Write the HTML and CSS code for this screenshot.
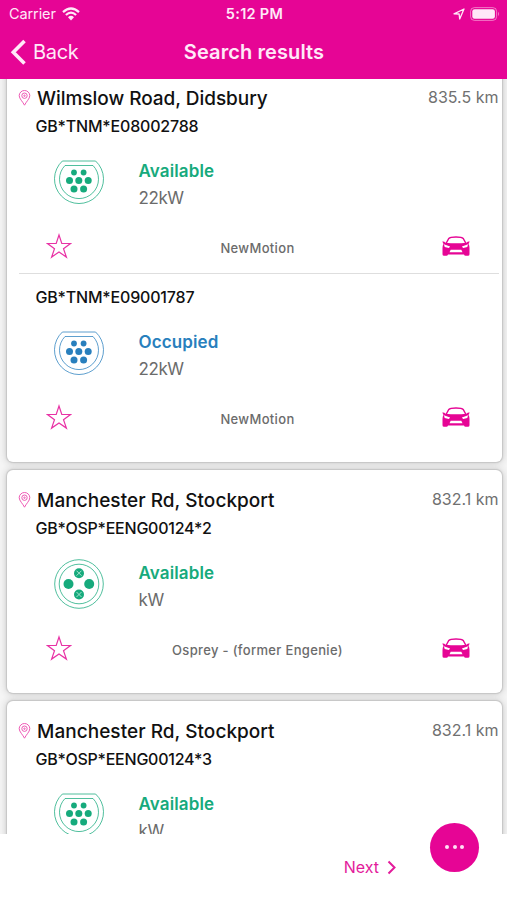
FILE: index.html
```html
<!DOCTYPE html>
<html lang="en">
<head>
<meta charset="utf-8">
<title>Search results</title>
<link rel="stylesheet" href="styles.css">
</head>
<body>
<svg class="defs" width="0" height="0" aria-hidden="true">
  <symbol id="pin" viewBox="0 0 12 16"><path d="M6 15.200C4.400 11.800.7 8.700.7 5.700a5.300 5.200 0 0 1 10.600 0c0 3-3.700 6.100-5.300 9.500z"/><circle cx="6" cy="5.700" r="2.700"/><circle cx="6" cy="5.700" r=".7"/></symbol>
  <symbol id="star" viewBox="0 0 26 26"><path d="M13 2l2.800 8.500h8.700l-7 5.200 2.900 8.400-7.400-5.200-7.400 5.200 2.900-8.400-7-5.200h8.700z"/></symbol>
  <symbol id="car" viewBox="0 0 28 22"><path class="roof" d="M4 8.500L6.800 3.500Q8 2 14 2T21.200 3.500L24 8.500"/><path d="M.3 6.600q1.700-.6 3.200 1.200Q14 8.800 24.500 7.800 26 6 27.700 6.600l-1.200 2.300q1 1.300 1 4v6.300q0 1.600-1.600 1.600h-2.300q-1.300 0-1.600-1.300H6q-.3 1.300-1.600 1.300H2.100q-1.600 0-1.600-1.600v-6.300q0-2.700 1-4z"/><path class="cut" d="M1.900 9.300l6.200 2.300-1.200 1.300-4.200-1zM26.100 9.300l-6.200 2.300 1.200 1.300 4.200-1zM8.700 14.800h10.600l1.200 2.400h-13z"/></symbol>
  <symbol id="type2" viewBox="0 0 50 50"><path class="ring" d="M8.400 4H41.600A24.500 24.500 0 1 1 8.400 4zM11 8.500H39A19.500 19.500 0 1 1 11 8.500z"/><circle cx="20" cy="15.500" r="2.900"/><circle cx="29.600" cy="15.500" r="2.900"/><circle cx="15.500" cy="23.500" r="3.500"/><circle cx="24.800" cy="23.500" r="3.500"/><circle cx="34.200" cy="23.500" r="3.500"/><circle cx="20" cy="32" r="3.500"/><circle cx="29.600" cy="32" r="3.500"/></symbol>
  <symbol id="round" viewBox="0 0 50 50"><circle class="ring" cx="25" cy="25" r="24.300"/><circle class="ring" cx="25" cy="25" r="19.800"/><circle cx="14.500" cy="25" r="5"/><circle cx="35.200" cy="25" r="5"/><circle cx="25" cy="14.200" r="5"/><circle cx="25" cy="35.500" r="5"/><path class="cross" d="M22.500 11.700l5 5m0-5l-5 5M22.500 33l5 5m0-5l-5 5"/></symbol>
</svg>
<div class="app">
  <header>
    <div class="status">
      <div class="carrier"><span>Carrier</span><svg width="18" height="14" viewBox="0 0 18 14"><path d="M1 5.100Q9-2.100 17 5.100M3.900 8Q9 3.300 14.100 8" fill="none" stroke="currentColor" stroke-width="2.200"/><path d="M6 10.200q3-2.700 6 0L9 13.400z" fill="currentColor"/></svg></div>
      <div class="clock">5:12 PM</div>
      <div class="power"><svg width="12" height="12" viewBox="0 0 12 12"><path d="M1 5.800L11 1 6.700 11 6.100 6z" fill="none" stroke="currentColor" stroke-width="1.300" stroke-linejoin="round"/></svg><svg width="30" height="14" viewBox="0 0 30 14"><rect x=".6" y=".6" width="26" height="12.800" rx="3.800" fill="none" stroke="currentColor" opacity=".5"/><rect x="2.300" y="2.300" width="22.600" height="9.400" rx="2.300" fill="currentColor"/><path d="M28 4.800q2 2.200 0 4.400z" fill="currentColor" opacity=".5"/></svg></div>
    </div>
    <nav>
      <div class="back"><svg width="17" height="27" viewBox="0 0 17 27"><path d="M14.500 2L3.300 13.300l11.200 11.200" fill="none" stroke="currentColor" stroke-width="3.600"/></svg><span>Back</span></div>
      <h1>Search results</h1>
    </nav>
  </header>
  <main>
    <article class="card">
      <div class="place"><svg class="pin"><use href="#pin"/></svg><h2>Wilmslow Road, Didsbury</h2><span class="distance">835.5 km</span></div>
      <section class="point">
        <h3>GB*TNM*E08002788</h3>
        <div class="details available"><svg class="plug"><use href="#type2"/></svg><div><div class="state">Available</div><div class="watts">22kW</div></div></div>
        <div class="actions"><svg class="star"><use href="#star"/></svg><span>NewMotion</span><svg class="car"><use href="#car"/></svg></div>
      </section>
      <section class="point">
        <h3 class="second">GB*TNM*E09001787</h3>
        <div class="details occupied"><svg class="plug"><use href="#type2"/></svg><div><div class="state">Occupied</div><div class="watts">22kW</div></div></div>
        <div class="actions"><svg class="star"><use href="#star"/></svg><span>NewMotion</span><svg class="car"><use href="#car"/></svg></div>
      </section>
    </article>
    <article class="card">
      <div class="place rd"><svg class="pin"><use href="#pin"/></svg><h2>Manchester Rd, Stockport</h2><span class="distance">832.1 km</span></div>
      <section class="point">
        <h3 class="long">GB*OSP*EENG00124*2</h3>
        <div class="details available"><svg class="plug"><use href="#round"/></svg><div><div class="state">Available</div><div class="watts">kW</div></div></div>
        <div class="actions"><svg class="star"><use href="#star"/></svg><span>Osprey - (former Engenie)</span><svg class="car"><use href="#car"/></svg></div>
      </section>
    </article>
    <article class="card">
      <div class="place rd"><svg class="pin"><use href="#pin"/></svg><h2>Manchester Rd, Stockport</h2><span class="distance">832.1 km</span></div>
      <section class="point">
        <h3 class="long">GB*OSP*EENG00124*3</h3>
        <div class="details available"><svg class="plug"><use href="#type2"/></svg><div><div class="state">Available</div><div class="watts">kW</div></div></div>
      </section>
    </article>
  </main>
  <footer><span>Next</span><svg width="10" height="15" viewBox="0 0 10 15"><path d="M1.500 1.500l6 6-6 6" fill="none" stroke="currentColor" stroke-width="2"/></svg></footer>
  <div class="more"><i></i><i></i><i></i></div>
</div>
</body>
</html>
```
FILE: styles.css
```css
* { box-sizing: border-box; }
body { margin: 0; font-family: Inter, "Liberation Sans", sans-serif; background: #fff; }
h1, h2, h3 { margin: 0; font-weight: 500; }
svg { display: block; flex: none; }
.defs { position: absolute; }
.app { position: relative; width: 507px; height: 900px; overflow: hidden; display: flex; flex-direction: column; }
header { height: 79px; flex: none; background: #e60595; color: #ffe9f8; }
.status { height: 27px; display: grid; grid-template-columns: 1fr auto 1fr; align-items: center; padding: 0 7px 0 9px; }
.carrier { display: flex; align-items: center; gap: 6px; font-size: 14.500px; letter-spacing: -.1px; }
.clock { font-size: 14.500px; font-weight: 600; letter-spacing: .3px; }
.power { display: flex; justify-content: flex-end; align-items: center; gap: 5px; }
nav { height: 50px; display: grid; grid-template-columns: 1fr auto 1fr; align-items: center; padding: 0 9px 0 10px; }
.back { display: flex; align-items: center; gap: 6px; font-size: 20px; letter-spacing: -.3px; }
h1 { font-size: 20px; font-weight: 600; letter-spacing: .1px; }
main { height: 755px; flex: none; overflow: hidden; padding: 0 5.500px 0 7px; background: #f5f5f5; }
.card { height: 222.500px; margin-bottom: 8.500px; border-radius: 6px; background: #fff; box-shadow: 0 0 1px 1px #c6c6c6, 0 0 7px 1px #c8c8c8; }
.card:first-child { height: 393.500px; margin-top: -11px; }
.place { height: 43px; padding: 17px 3px 0 11px; display: flex; align-items: center; }
.pin { width: 13px; height: 16px; margin-right: 6px; fill: none; stroke: #ee59b5; }
h2 { font-size: 19px; line-height: 26px; padding-top: 2px; color: #111; letter-spacing: -.04px; }
.rd h2 { letter-spacing: .04px; }
.distance { margin: -2px 0 0 auto; font-size: 16px; color: #707070; }
.point { margin: 0 3px 0 11.500px; }
.point + .point { border-top: 1px solid #dedede; }
h3 { padding: 5px 0 0 17px; font-size: 16px; line-height: 20px; color: #111; letter-spacing: -.18px; }
h3.second { padding-top: 13.500px; }
h3.long { letter-spacing: -.23px; }
.details { height: 90px; padding: 21px 0 0 35px; display: flex; gap: 35px; }
.available { color: #16aa7c; }
.occupied { color: #287fbd; }
.plug { width: 50px; height: 50px; fill: currentColor; }
.ring { fill: none; stroke: currentColor; stroke-width: 1; opacity: .75; }
.cross { fill: none; stroke: #a8e2cf; }
.state, .watts { line-height: 27px; font-size: 17px; position: relative; top: 1px; }
.state { font-weight: 600; letter-spacing: .12px; }
.watts { color: #6b6b6b; letter-spacing: -.4px; }
.actions { height: 46.500px; padding: 0 29px 6.500px 27px; display: grid; grid-template-columns: 27px 1fr 28px; align-items: center; text-align: center; color: #6b6b6b; font-size: 13px; font-weight: 500; letter-spacing: .34px; }
.actions span { padding: 4px 0 0 1px; }
.star { width: 26px; height: 26px; fill: none; stroke: #e832a5; stroke-width: 1.200; }
.car { width: 28px; height: 22px; fill: #e60595; }
.roof { fill: none; stroke: #e60595; stroke-width: 1.400; }
.cut { fill: #fff; }
footer { height: 66px; display: flex; justify-content: flex-end; align-items: center; gap: 8px; padding-right: 110px; color: #e31b9b; font-size: 16px; background: #fff; }
.more { position: absolute; left: 430px; top: 823px; width: 49px; height: 49px; border-radius: 50%; background: #e60595; display: flex; justify-content: center; align-items: center; gap: 3.500px; padding-bottom: 2px; }
.more i { width: 4px; height: 4px; border-radius: 50%; background: #ffe2f5; }
```
